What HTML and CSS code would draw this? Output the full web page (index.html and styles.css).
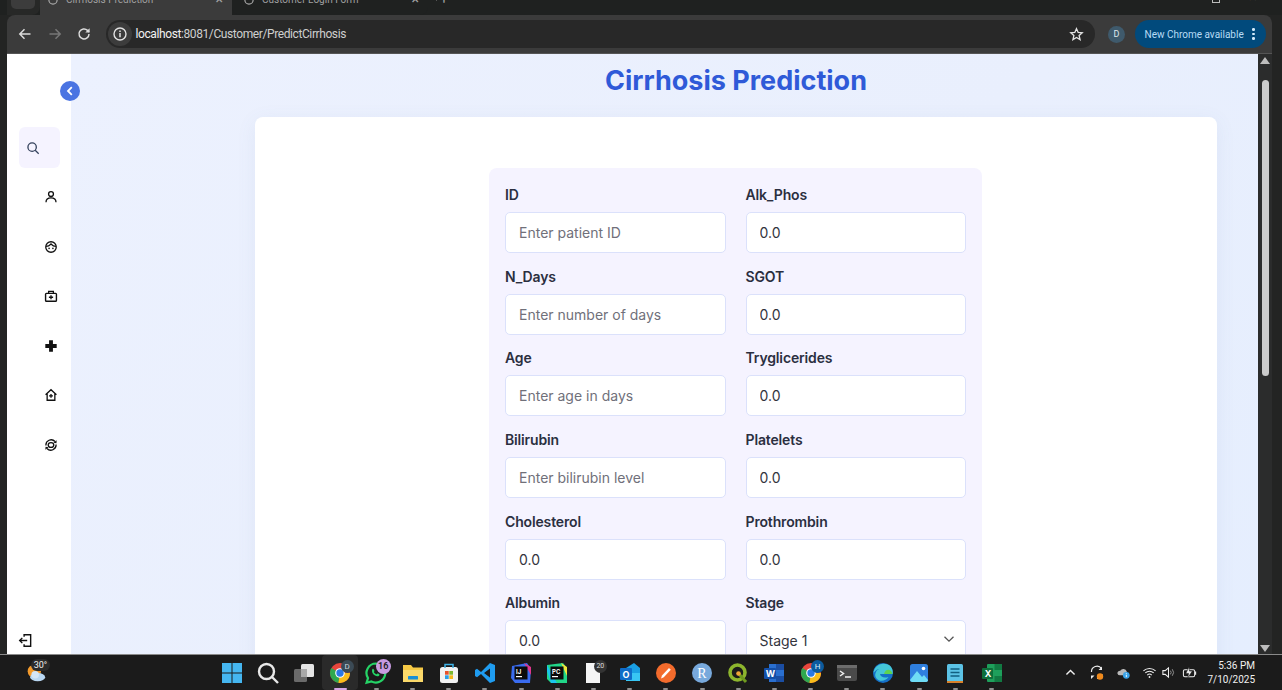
FILE: index.html
```html
<!DOCTYPE html>
<html lang="en">
<head>
<meta charset="utf-8">
<title>Cirrhosis Prediction</title>
<link rel="stylesheet" href="styles.css">
</head>
<body>
<div class="tabstrip">
  <div class="tab-corner"><span class="tab-search"></span></div>
  <div class="tab tab-active">
    <svg class="tab-ico" viewBox="0 0 16 16"><circle cx="8" cy="8" r="5.5" fill="none" stroke="#a9a9a9" stroke-width="1.6"/></svg>
    <span class="tab-title">Cirrhosis Prediction</span><span class="tab-x">×</span>
  </div>
  <div class="tab tab-second">
    <svg class="tab-ico" viewBox="0 0 16 16"><circle cx="8" cy="8" r="5.5" fill="none" stroke="#a9a9a9" stroke-width="1.6"/></svg>
    <span class="tab-title">Customer Login Form</span><span class="tab-x">×</span>
  </div>
  <span class="tab-plus">+</span>
  <div class="win-controls">
    <span class="win-max"></span><span class="win-close">×</span>
  </div>
</div>

<div class="toolbar">
  <svg class="nav-ico" viewBox="0 0 16 16"><path d="M13.5 8H3M7.5 3.3 2.800 8l4.700 4.700" fill="none" stroke="#dcdcdc" stroke-width="1.500"/></svg>
  <svg class="nav-ico" viewBox="0 0 16 16"><path d="M2.500 8H13M8.500 3.300 13.200 8l-4.700 4.700" fill="none" stroke="#777" stroke-width="1.500"/></svg>
  <svg class="nav-ico" viewBox="0 0 16 16"><path d="M13 8a5 5 0 1 1-1.500-3.600L13 6" fill="none" stroke="#dcdcdc" stroke-width="1.500"/><path d="M13.600 2.200v4.300H9.300z" fill="#dcdcdc"/></svg>
  <div class="omnibox">
    <span class="site-info"><svg viewBox="0 0 16 16"><circle cx="8" cy="8" r="6" fill="none" stroke="#e2e2e2" stroke-width="1.400"/><path d="M8 7v4.200M8 4.600v1.300" stroke="#e2e2e2" stroke-width="1.500"/></svg></span>
    <span class="url"><span class="url-host">localhost</span>:8081/Customer/PredictCirrhosis</span>
    <svg class="star" viewBox="0 0 16 16"><path d="M8 1.800l1.800 4 4.300.4-3.300 2.900 1 4.300L8 11.100l-3.800 2.300 1-4.300-3.300-2.900 4.300-.4z" fill="none" stroke="#e4e4e4" stroke-width="1.400"/></svg>
  </div>
  <span class="avatar">D</span>
  <div class="update-pill"><span>New Chrome available</span><span class="pill-dots"><i></i><i></i><i></i></span></div>
</div>

<div class="viewport">
  <aside class="sidebar">
    <span class="toggle"><svg viewBox="0 0 12 12"><path d="M7.800 2.200 4 6l3.800 3.800" fill="none" stroke="#fff" stroke-width="1.800"/></svg></span>
    <nav class="nav">
      <a class="nav-item active"><svg viewBox="0 0 16 16"><circle cx="7" cy="7" r="4.800" fill="none" stroke="#33415c" stroke-width="1.500"/><path d="M10.500 10.500 14.500 14.500" stroke="#33415c" stroke-width="1.500"/></svg></a>
      <a class="nav-item"><svg viewBox="0 0 16 16"><circle cx="8" cy="4.600" r="2.800" fill="none" stroke="#111" stroke-width="1.500"/><path d="M2.300 14c0-3.200 2.600-5 5.700-5s5.700 1.800 5.700 5" fill="none" stroke="#111" stroke-width="1.500"/></svg></a>
      <a class="nav-item"><svg viewBox="0 0 16 16"><circle cx="8" cy="8" r="6" fill="none" stroke="#111" stroke-width="1.500"/><path d="M2.400 7.400C5 7.400 6.400 6.400 8 4.600c1.600 1.800 3 2.800 5.600 2.800" fill="none" stroke="#111" stroke-width="1.400"/><circle cx="5.800" cy="9.600" r=".9" fill="#111"/><circle cx="10.200" cy="9.600" r=".9" fill="#111"/></svg></a>
      <a class="nav-item"><svg viewBox="0 0 16 16"><rect x="1.800" y="5" width="12.400" height="9" rx="1" fill="none" stroke="#111" stroke-width="1.600"/><path d="M5.300 5V2.800h5.400V5M8 7v4.800M5.600 9.400h4.800" fill="none" stroke="#111" stroke-width="1.500"/></svg></a>
      <a class="nav-item"><svg viewBox="0 0 16 16"><path d="M5.800 1.500h4.400v4.300h4.300v4.400h-4.300v4.300H5.800v-4.300H1.500V5.800h4.300z" fill="#111"/></svg></a>
      <a class="nav-item"><svg viewBox="0 0 16 16"><path d="M1.800 7.600 8 2l6.200 5.600M3.600 6.200v7.800h8.800V6.200M8 6.800v4.400M5.800 9h4.400" fill="none" stroke="#111" stroke-width="1.500"/></svg></a>
      <a class="nav-item"><svg viewBox="0 0 16 16"><ellipse cx="8" cy="8" rx="3.200" ry="2.800" fill="none" stroke="#111" stroke-width="1.500"/><path d="M2.200 8.500A6 6 0 0 1 12.600 4M13.800 7.500A6 6 0 0 1 3.400 12" fill="none" stroke="#111" stroke-width="1.500"/><path d="M14.500 2.500l-.3 3.500-3.400-.7zM1.500 13.500l.3-3.500 3.400.7z" fill="#111"/></svg></a>
    </nav>
    <a class="logout"><svg viewBox="0 0 16 16"><path d="M6.500 4V1.800h7v12.400h-7V12M9.800 8H1.800M4.600 5.200 1.800 8l2.800 2.800" fill="none" stroke="#111" stroke-width="1.500"/></svg></a>
  </aside>

  <main class="main">
    <h1 class="page-title">Cirrhosis Prediction</h1>
    <section class="card">
      <form class="panel">
        <div class="field"><label>ID</label><input placeholder="Enter patient ID"></div>
        <div class="field"><label>Alk_Phos</label><input value="0.0"></div>
        <div class="field"><label>N_Days</label><input placeholder="Enter number of days"></div>
        <div class="field"><label>SGOT</label><input value="0.0"></div>
        <div class="field"><label>Age</label><input placeholder="Enter age in days"></div>
        <div class="field"><label>Tryglicerides</label><input value="0.0"></div>
        <div class="field"><label>Bilirubin</label><input placeholder="Enter bilirubin level"></div>
        <div class="field"><label>Platelets</label><input value="0.0"></div>
        <div class="field"><label>Cholesterol</label><input value="0.0"></div>
        <div class="field"><label>Prothrombin</label><input value="0.0"></div>
        <div class="field"><label>Albumin</label><input value="0.0"></div>
        <div class="field"><label>Stage</label>
          <div class="select-wrap">
            <select><option>Stage 1</option></select>
            <svg class="chevron" viewBox="0 0 12 12"><path d="M1.500 3.700 6 8.200l4.500-4.500" fill="none" stroke="#555" stroke-width="1.300"/></svg>
          </div>
        </div>
      </form>
    </section>
  </main>

  <div class="scrollbar">
    <span class="arrow-up"></span>
    <span class="thumb"></span>
    <span class="arrow-down"></span>
  </div>
</div>

<footer class="taskbar">
  <div class="weather">
    <svg viewBox="0 0 24 24"><circle cx="10" cy="10" r="8" fill="#f39a2b"/><ellipse cx="14" cy="17" rx="9" ry="5" fill="#b9d7f2"/><circle cx="11" cy="14" r="4.500" fill="#d4e6f7"/></svg>
    <span class="temp">30°</span>
  </div>
  <div class="apps">
    <span class="app"><svg viewBox="0 0 24 24"><path d="M2 2h9.500v9.500H2zM12.500 2H22v9.500h-9.500zM2 12.500h9.500V22H2zM12.500 12.500H22V22h-9.500z" fill="#45b6f0"/></svg></span>
    <span class="app"><svg viewBox="0 0 24 24"><circle cx="10.500" cy="10.500" r="7.500" fill="none" stroke="#e8e8e8" stroke-width="2.400"/><path d="M16 16l6 6" stroke="#e8e8e8" stroke-width="2.400"/></svg></span>
    <span class="app"><svg viewBox="0 0 24 24"><rect x="2" y="8" width="13" height="13" rx="1.500" fill="#6a6a6a"/><rect x="9" y="3" width="13" height="13" rx="1.500" fill="#e4e4e4"/><rect x="9" y="8" width="6" height="8" fill="#a9a9a9"/></svg></span>
    <span class="app app-open"><svg viewBox="0 0 24 24"><use href="#chrome"/></svg><span class="badge badge-d">D</span><i class="dot dot-active"></i></span>
    <span class="app"><svg viewBox="0 0 24 24"><path d="M12 2.500a9.500 9.500 0 0 0-8 14.600L2.600 21.700l4.700-1.300A9.500 9.500 0 1 0 12 2.500z" fill="none" stroke="#25d366" stroke-width="2.200"/><path d="M8.500 8c1-1 1.500 1 2 2-.5 1-.8 1 0 2s2 1.600 2.500.9c.8-.9 2 .2 2.600.8-.7 2-3 1.800-5 .6S7.200 10 8.500 8z" fill="#25d366"/></svg><span class="badge badge-n">16</span><i class="dot"></i></span>
    <span class="app"><svg viewBox="0 0 24 24"><path d="M2 4h8l2 2.500h10V21H2z" fill="#f6c945"/><rect x="2" y="9" width="20" height="12" fill="#fbd96a"/><rect x="7" y="15" width="10" height="3.500" rx=".6" fill="#1a8fd6"/></svg><i class="dot"></i></span>
    <span class="app"><svg viewBox="0 0 24 24"><rect x="3" y="6" width="18" height="16" rx="2.500" fill="#f2f2f2"/><path d="M8 7V3.500h8V7" fill="none" stroke="#3fb4e8" stroke-width="1.500"/><rect x="8" y="10" width="3.700" height="3.700" fill="#e8522a"/><rect x="12.300" y="10" width="3.700" height="3.700" fill="#7cb82f"/><rect x="8" y="14.300" width="3.700" height="3.700" fill="#2a9fe8"/><rect x="12.300" y="14.300" width="3.700" height="3.700" fill="#f6b91c"/></svg><i class="dot"></i></span>
    <span class="app"><svg viewBox="0 0 24 24"><path d="M17 2 8 11 4 7.800 2 9v6l2 1.200L8 13l9 9 5-2V4zM17 7.500v9L11 12z" fill="#1f9cf0"/></svg><i class="dot"></i></span>
    <span class="app"><svg viewBox="0 0 24 24"><path d="M3 5 18 2l4 6-1 14H6l-4-5z" fill="#3a6cf0"/><path d="M15 2l7 4v8z" fill="#e0368c"/><rect x="5.500" y="5.500" width="13" height="13" fill="#0b0b0b"/><text x="7" y="12.500" class="ico-text">IJ</text><rect x="7" y="15" width="6" height="1.200" fill="#fff"/></svg><i class="dot"></i></span>
    <span class="app"><svg viewBox="0 0 24 24"><path d="M2 4 18 2l4 5v15H6l-4-4z" fill="#21d789"/><path d="M2 10l4 12h6L2 4z" fill="#1cc4ee"/><path d="M16 2l6 4v9z" fill="#f0e63a"/><rect x="5.500" y="5.500" width="13" height="13" fill="#0b0b0b"/><text x="7" y="12.500" class="ico-text">PC</text><rect x="7" y="15" width="6" height="1.200" fill="#fff"/></svg><i class="dot"></i></span>
    <span class="app"><svg viewBox="0 0 24 24"><path d="M5 2h10l4 4.500V22H5z" fill="#f5f5f5"/></svg><span class="badge badge-g">20</span><i class="dot"></i></span>
    <span class="app"><svg viewBox="0 0 24 24"><path d="M8 7l8-5 6 5v12H8z" fill="#1aa0e4"/><path d="M8 12h14v8H8z" fill="#38c6f4"/><rect x="2" y="7" width="12" height="12" rx="1" fill="#0f6cc8"/><text x="4.500" y="16.500" class="ico-text-lg">O</text></svg><i class="dot"></i></span>
    <span class="app"><svg viewBox="0 0 24 24"><circle cx="12" cy="12" r="10" fill="#f36b2c"/><path d="M7 17.500l1-3 7-7.500 1.800 1.700-7 7.500z" fill="#fff"/></svg><i class="dot"></i></span>
    <span class="app"><svg viewBox="0 0 24 24"><circle cx="12" cy="12" r="10" fill="#78a9dc"/><text x="12" y="17" text-anchor="middle" class="ico-r">R</text></svg><i class="dot"></i></span>
    <span class="app"><svg viewBox="0 0 24 24"><circle cx="11.500" cy="11.500" r="7.500" fill="none" stroke="#8db52d" stroke-width="3.600"/><path d="M12 12l8 9" stroke="#6f9a1f" stroke-width="3"/><circle cx="12.500" cy="12.500" r="2.300" fill="#f0a437"/></svg><i class="dot"></i></span>
    <span class="app"><svg viewBox="0 0 24 24"><path d="M7 3h15v18H7z" fill="#2a6fd0"/><path d="M14 3h8v6h-8zM14 15h8v6h-8z" fill="#1b4ea3"/><rect x="2" y="7" width="12" height="11" rx="1" fill="#144fa8"/><text x="3.700" y="16" class="ico-text-lg">W</text></svg><i class="dot"></i></span>
    <span class="app"><svg viewBox="0 0 24 24"><use href="#chrome"/></svg><span class="badge badge-h">H</span><i class="dot"></i></span>
    <span class="app"><svg viewBox="0 0 24 24"><rect x="2" y="4" width="20" height="16" rx="2" fill="#4a4a4a"/><rect x="2" y="4" width="20" height="3" fill="#6c6c6c"/><path d="M5 10l3.500 2.500L5 15M10 16h6" fill="none" stroke="#f0f0f0" stroke-width="1.500"/></svg><i class="dot"></i></span>
    <span class="app"><svg viewBox="0 0 24 24"><circle cx="12" cy="12" r="10" fill="#1570c8"/><path d="M2.500 11C4 4 11 1 17 3.500c4 2 5.500 6 4.500 9.500H9c.5 3 4 4.500 8.500 3-3 4.500-9 5-12 1.500-2.500-3-1-7 1.500-9 3-2 5.500-1 6.500 1-3-3-8-2-10.500 2z" fill="#44c6d8"/><path d="M13 13c1-5 7-6 8.500 0z" fill="#5fd24f"/></svg><i class="dot"></i></span>
    <span class="app"><svg viewBox="0 0 24 24"><rect x="3" y="3" width="18" height="18" rx="2.500" fill="#2f7fde"/><path d="M3 19l7-9 5 6 2-2 4 5v.5A2.500 2.500 0 0 1 18.500 21h-13A2.500 2.500 0 0 1 3 19z" fill="#6fdcf5"/><circle cx="16.500" cy="7.500" r="1.800" fill="#fff"/></svg><i class="dot"></i></span>
    <span class="app"><svg viewBox="0 0 24 24"><rect x="4" y="3" width="16" height="19" rx="1.500" fill="#5cc3e6"/><rect x="4" y="20" width="16" height="2" fill="#d9812a"/><path d="M7.500 8h9M7.500 11.500h9M7.500 15h9" stroke="#125f80" stroke-width="1.300"/></svg><i class="dot"></i></span>
    <span class="app"><svg viewBox="0 0 24 24"><rect x="7" y="3" width="15" height="18" rx="1" fill="#1e9f5b"/><path d="M14.500 3H22v6h-7.500zM14.500 15H22v6h-7.500z" fill="#117a42"/><rect x="2" y="7" width="11" height="11" rx="1" fill="#0e6e3a"/><text x="4.700" y="16" class="ico-text-lg">X</text></svg><i class="dot"></i></span>
  </div>
  <div class="tray">
    <svg class="tray-ico tray-caret" viewBox="0 0 16 16"><path d="M3 10.500 8 5.500l5 5" fill="none" stroke="#f0f0f0" stroke-width="1.700"/></svg>
    <svg class="tray-ico tray-sync" viewBox="0 0 16 16"><path d="M2.500 7A5.500 5.500 0 0 1 12.500 3.500M13 9a5.500 5.500 0 0 1-5 4.500" fill="none" stroke="#eee" stroke-width="1.200"/><path d="M13 1.500V5H9.500zM2 14v-3.500h3.500z" fill="#eee"/><circle cx="11" cy="11.500" r="3.200" fill="#f08a1c"/></svg>
    <svg class="tray-ico tray-cloud" viewBox="0 0 16 16"><path d="M1.500 9a3 3 0 0 1 3-3 4 4 0 0 1 7 1v4h-7a3 3 0 0 1-3-2z" fill="#b9b9b9"/><circle cx="11" cy="11" r="3.600" fill="#3aa3e8"/><path d="M11 10.300v2.600M11 8.800v.8" stroke="#fff" stroke-width="1"/></svg>
    <svg class="tray-ico tray-wifi" viewBox="0 0 16 16"><path d="M1.500 6.200a9.500 9.500 0 0 1 13 0M3.500 8.500a6.500 6.500 0 0 1 9 0M5.600 10.700a3.500 3.500 0 0 1 4.800 0" fill="none" stroke="#eee" stroke-width="1.100"/><circle cx="8" cy="12.800" r="1" fill="#eee"/></svg>
    <svg class="tray-ico tray-vol" viewBox="0 0 16 16"><path d="M2 6h2.500L8 3v10L4.500 10H2z" fill="none" stroke="#eee" stroke-width="1.100"/><path d="M10 6a3 3 0 0 1 0 4M12 4.500a5.500 5.500 0 0 1 0 7" fill="none" stroke="#999" stroke-width="1"/></svg>
    <svg class="tray-ico tray-batt" viewBox="0 0 16 16"><rect x="1.500" y="5" width="12" height="7.500" rx="1.500" fill="none" stroke="#eee" stroke-width="1.100"/><path d="M14.500 7v3.500" stroke="#eee" stroke-width="1.200"/><path d="M7.500 2 4 9h3l-1 5 5-7.500H8z" fill="#eee" stroke="#1b1b1b" stroke-width=".6"/></svg>
    <div class="clock"><span>5:36 PM</span><span>7/10/2025</span></div>
  </div>
</footer>

<svg class="defs" width="0" height="0">
  <defs>
    <g id="chrome">
      <circle cx="12" cy="12" r="10" fill="#e8453c"/>
      <path d="M12 12 3.300 7A10 10 0 0 0 10.500 21.900z" fill="#2fa84f"/>
      <path d="M12 12h10a10 10 0 0 1-11.500 9.900z" fill="#f9bd1b"/>
      <circle cx="12" cy="12" r="4.800" fill="#fff"/>
      <circle cx="12" cy="12" r="3.700" fill="#2b78e4"/>
    </g>
  </defs>
</svg>
</body>
</html>
```

FILE: styles.css
```css
* { box-sizing: border-box; }
html, body { margin: 0; padding: 0; }
body {
  width: 1282px;
  height: 690px;
  overflow: hidden;
  display: flex;
  flex-direction: column;
  background: #232423;
  font-family: "Inter", "Liberation Sans", sans-serif;
}

/* browser tab strip */
.tabstrip {
  height: 15px;
  flex: none;
  display: flex;
  background: #1f2120;
  overflow: hidden;
  color: #a0a0a0;
  font-family: "Roboto", "Liberation Sans", sans-serif;
  font-size: 10px;
  padding-left: 7px;
}
.tab-corner { width: 33px; background: #272827; border-radius: 0 0 8px 0; }
.tab-search { display: block; width: 24px; height: 9px; margin-left: 4px; background: #3c3c3c; border-radius: 0 0 5px 5px; }
.tab {
  width: 196px;
  height: 15px;
  display: flex;
  align-items: flex-start;
  padding: 0 9px 0 11px;
  gap: 7px;
  border-radius: 0 0 8px 8px;
  background: #1f2120;
}
.tab-active { background: #3b3b3b; width: 192px; padding-left: 7px; border-radius: 0; }
.tab-ico { width: 12px; height: 12px; margin-top: -6px; flex: none; }
.tab-title { margin-top: -8px; line-height: 16px; flex: 1; white-space: nowrap; }
.tab-x { margin-top: -9px; line-height: 16px; font-size: 14px; }
.tab-plus { margin-top: -9px; margin-left: 8px; line-height: 16px; font-size: 14px; padding-left: 3px; border-left: 1px solid #555; height: 10px; }
.win-controls { margin-left: auto; display: flex; gap: 28px; padding-right: 25px; }
.win-max { width: 8px; height: 4px; border: 1px solid #bbb; border-top: 0; margin-top: -1px; }
.win-close { margin-top: -11px; font-size: 16px; line-height: 16px; color: #ccc; }

/* browser toolbar */
.toolbar {
  height: 39px;
  flex: none;
  margin: 0 10px 0 7px;
  padding: 0 6px 0 10px;
  display: flex;
  align-items: center;
  background: #3b3b3b;
  border-radius: 8px 8px 0 0;
  border-bottom: 1px solid #555;
}
.nav-ico { width: 16px; height: 16px; margin-right: 13.500px; flex: none; }
.omnibox {
  width: 989px;
  flex: none;
  height: 28px;
  display: flex;
  align-items: center;
  background: #282828;
  border-radius: 14px;
  padding: 0 11px 0 2px;
  font-family: "Roboto", "Liberation Sans", sans-serif;
  font-size: 12px;
  letter-spacing: -.4px;
}
.site-info { width: 24px; height: 24px; border-radius: 50%; background: #3c3c3c; display: flex; align-items: center; justify-content: center; margin-right: 4px; }
.site-info svg { width: 16px; height: 16px; }
.url-host { color: #f2f2f2; }
.url { flex: 1; color: #cfcfcf; }
.star { width: 15px; height: 15px; }
.avatar {
  width: 17px; height: 17px; margin-left: 13.500px;
  flex: none;
  border-radius: 50%;
  background: #3f5a6c;
  color: #dfe8ee;
  font-family: "Roboto", sans-serif;
  font-size: 9px;
  display: flex; align-items: center; justify-content: center;
}
.update-pill {
  width: 131px; height: 28px; margin-left: 9.500px;
  flex: none;
  border-radius: 14px;
  background: #014a7c;
  color: #b8dcf6;
  font-family: "Roboto", "Liberation Sans", sans-serif;
  font-size: 10px;
  display: flex; align-items: center; justify-content: space-between;
  padding: 0 11px 0 10px;
  white-space: nowrap;
}
.pill-dots { display: flex; flex-direction: column; gap: 2px; }
.pill-dots i { display: block; width: 2.500px; height: 2.500px; border-radius: 50%; background: #d3ebfb; }

/* page area */
.viewport {
  height: 600px;
  flex: none;
  display: flex;
  margin: 0 10px 0 7px;
}
.sidebar {
  position: relative;
  width: 64px;
  flex: none;
  background: #fff;
  display: flex;
  flex-direction: column;
  padding: 73px 0 6px 12px;
}
.toggle {
  position: absolute;
  left: 53px;
  top: 27px;
  width: 20px;
  height: 20px;
  border-radius: 50%;
  background: #4a74e2;
  display: flex;
  align-items: center;
  justify-content: center;
  z-index: 2;
}
.toggle svg { width: 12px; height: 12px; }
.nav { display: flex; flex-direction: column; gap: 8.500px; }
.nav-item {
  width: 41px;
  height: 41px;
  display: flex;
  align-items: center;
  padding-left: 25px;
  border-radius: 6px;
}
.nav-item.active { background: #f5f3ff; padding-left: 7px; }
.nav-item svg { width: 14px; height: 14px; }
.logout { margin-top: auto; margin-left: -1px; height: 15px; }
.logout svg { width: 15px; height: 15px; display: block; }

.main {
  flex: 1;
  min-width: 0;
  overflow: hidden;
  padding: 6px 41px 0 184px;
  background: linear-gradient(135deg, #ecf1fe 0%, #e9effd 55%, #e5eefe 100%);
}
.page-title {
  margin: 0 0 15px;
  font-size: 27px;
  line-height: 42px;
  font-weight: 700;
  color: #2f5ad8;
  text-align: center;
}
.card {
  background: #fff;
  border-radius: 8px;
  padding: 51px 235px 0 234px;
  height: 600px;
  box-shadow: 0 4px 20px rgba(90, 110, 170, .08);
}
.panel {
  background: #f5f3ff;
  border-radius: 8px;
  padding: 16px;
  display: grid;
  grid-template-columns: 221px 220.500px;
  column-gap: 19.500px;
  row-gap: 12.700px;
}
.field label {
  display: block;
  height: 23px;
  margin-bottom: 5px;
  font-size: 14px;
  line-height: 22px;
  font-weight: 600;
  letter-spacing: -.15px;
  color: #2b2f3f;
}
.field input, .field select {
  display: block;
  width: 100%;
  height: 41px;
  padding: 0 13px;
  border: 1.500px solid #dbe1fb;
  border-radius: 5px;
  background: #fff;
  font: 400 14px "Inter", "Liberation Sans", sans-serif;
  color: #33343d;
  appearance: none;
  outline: 0;
}
.field input::placeholder { color: #70707a; opacity: 1; }
.select-wrap { position: relative; }
.chevron { position: absolute; right: 11px; top: 13px; width: 12px; height: 12px; }

/* scrollbar */
.scrollbar {
  width: 14px;
  flex: none;
  background: #2b2c2c;
  display: flex;
  flex-direction: column;
  align-items: center;
  padding-top: 3px;
}
.arrow-up { width: 0; height: 0; border: 5px solid transparent; border-top: 0; border-bottom: 7px solid #bdbdbd; }
.thumb { width: 7px; height: 296px; margin-top: 16px; border-radius: 4px; background: #cbcbcb; }
.arrow-down { margin-top: auto; margin-bottom: 2px; width: 0; height: 0; border: 5px solid transparent; border-bottom: 0; border-top: 7px solid #bdbdbd; }

/* windows taskbar */
.taskbar {
  height: 36px;
  flex: none;
  display: flex;
  align-items: center;
  background: #1b1b1b;
  border-top: 1px solid #8a8a8a;
  color: #f0f0f0;
}
.weather { width: 213.500px; padding-left: 26px; position: relative; flex: none; }
.weather svg { width: 20px; height: 20px; display: block; }
.temp {
  position: absolute;
  left: 31px;
  top: -4px;
  width: 19px;
  height: 12px;
  border-radius: 6px;
  background: #2b2b2b;
  font-family: "Roboto", sans-serif;
  font-size: 9px;
  line-height: 12px;
  text-align: center;
}
.apps { display: flex; flex: none; }
.app {
  position: relative;
  width: 36.200px;
  height: 35px;
  display: flex;
  align-items: center;
  justify-content: center;
}
.app > svg { width: 24px; height: 24px; display: block; }
.app-open { background: #2a2a2a; border-radius: 4px; }
.dot {
  position: absolute;
  left: 50%;
  bottom: 0;
  width: 5px;
  height: 2.500px;
  margin-left: -2.500px;
  border-radius: 2px;
  background: #8f8f8f;
}
.dot-active { width: 13px; margin-left: -6.500px; background: #d6a6e6; }
.badge {
  position: absolute;
  left: 18.500px;
  top: 5px;
  width: 13px;
  height: 13px;
  border-radius: 50%;
  font-family: "Roboto", sans-serif;
  font-size: 8px;
  line-height: 13px;
  text-align: center;
}
.badge-d { background: #3b4a55; color: #c9d5dd; }
.badge-n { background: #c89be0; color: #1d1d1d; left: 17.500px; top: 3.500px; width: 15px; height: 15px; line-height: 15px; font-size: 9px; font-weight: 600; }
.badge-g { background: #333; color: #ddd; font-size: 7px; }
.badge-h { background: #0b5b9e; color: #d9ecf9; }
.ico-text { font: 700 6px "Inter", sans-serif; fill: #fff; }
.ico-text-lg { font: 700 9px "Inter", sans-serif; fill: #fff; }
.ico-r { font: 400 14px "Liberation Serif", serif; fill: #fff; }
.tray { margin-left: 54.500px; display: flex; align-items: center; flex: 1; padding-right: 27px; }
.tray-ico { width: 15px; height: 15px; flex: none; }
.tray-caret { width: 13px; height: 13px; margin-right: 12px; }
.tray-sync { width: 16px; height: 16px; margin-right: 11px; }
.tray-cloud { margin-right: 11px; }
.tray-wifi { margin-right: 4px; }
.tray-vol { margin-right: 6px; }
.clock {
  margin-left: auto;
  display: flex;
  flex-direction: column;
  align-items: flex-end;
  font-family: "Roboto", sans-serif;
  font-size: 10px;
  line-height: 14px;
}
.defs { display: block; height: 0; }
```
